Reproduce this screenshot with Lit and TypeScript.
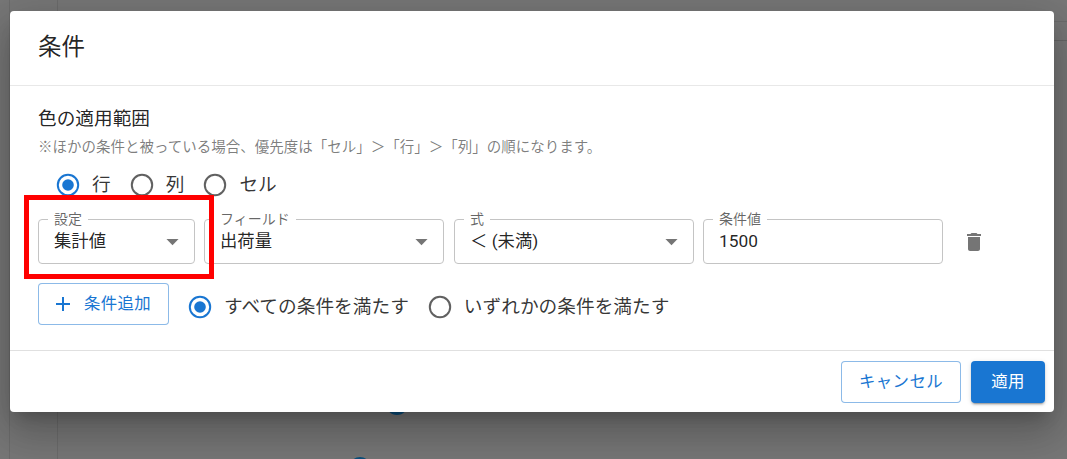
import { LitElement, html, css, svg } from "lit";
import { customElement } from "lit/decorators.js";

const caret = svg`<svg class="caret" width="29" height="29" viewBox="0 0 24 24"><path d="M7 10l5 5 5-5z" fill="#757575"/></svg>`;

@customElement("app-root")
export class AppRoot extends LitElement {
  static styles = css`
    :host {
      display: block;
      position: relative;
      width: 1067px;
      height: 459px;
      overflow: hidden;
      background: #777;
      font-family: Roboto, "Noto Sans CJK JP", sans-serif;
      color: rgba(0, 0, 0, 0.87);
    }
    * { box-sizing: border-box; }
    .bg { position: absolute; background: #6c6c6c; }
    .v1 { left: 9px; top: 0; width: 1px; height: 459px; }
    .v2 { left: 57px; top: 0; width: 1px; height: 459px; }
    .h1 { left: 1054px; top: 21px; width: 13px; height: 1px; }
    .h2 { left: 1054px; top: 40px; width: 13px; height: 1px; background: #666; }
    .dot { position: absolute; width: 22px; height: 22px; border-radius: 50%; border: 3px solid #0b4f7c; background: transparent; }
    .d1 { left: 386px; top: 393px; }
    .d2 { left: 349px; top: 457px; }
    .dialog {
      position: absolute;
      left: 10px;
      top: 11px;
      width: 1044px;
      height: 401px;
      background: #fff;
      border-radius: 4px;
      display: flex;
      flex-direction: column;
      box-shadow: 0 11px 15px -7px rgba(0,0,0,.2), 0 24px 38px 3px rgba(0,0,0,.14), 0 9px 46px 8px rgba(0,0,0,.12);
    }
    .title {
      height: 75px;
      padding: 0 28px 2px;
      display: flex;
      align-items: center;
      font-size: 23.5px;
      line-height: 32px;
      border-bottom: 1px solid #e8e8e8;
    }
    .content {
      flex: 1;
      padding: 21px 28px 0;
      display: flex;
      flex-direction: column;
      border-bottom: 1px solid #e0e0e0;
    }
    .heading { font-size: 18.67px; line-height: 24px; height: 24px; }
    .note { font-size: 14.5px; line-height: 18px; margin-top: 8px; color: rgba(0,0,0,.52); white-space: nowrap; }
    .radios { display: flex; align-items: center; height: 24px; }
    .scope { margin-top: 16px; padding-left: 18px; gap: 19px; }
    .opt { display: flex; align-items: center; gap: 12px; font-size: 18.7px; line-height: 24px; color: rgba(0,0,0,.8); }
    .radio { width: 24px; height: 24px; flex: none; display: block; }
    .fields { display: flex; margin-top: 22px; gap: 10px; align-items: center; }
    .field {
      position: relative;
      height: 45px;
      border: 1px solid #c4c4c4;
      border-radius: 4px;
      display: flex;
      align-items: center;
      justify-content: space-between;
      padding: 0 7px 0 15px;
      font-size: 17.33px;
      line-height: 24px;
      flex: none;
    }
    .value { margin-top: -1px; white-space: nowrap; }
    .caret { flex: none; }
    .legend {
      position: absolute;
      left: 9px;
      top: -9px;
      padding: 0 6px;
      background: #fff;
      font-size: 14px;
      line-height: 16px;
      color: rgba(0,0,0,.6);
      white-space: nowrap;
    }
    .w1 { width: 157px; margin-right: -1px; }
    .w2 { width: 240px; }
    .w3 { width: 240px; }
    .w4 { width: 240px; margin-left: -1px; }
    .trash { margin-left: 9px; width: 24px; height: 24px; display: block; flex: none; }
    .actions { display: flex; align-items: flex-start; margin-top: 19px; }
    .btn {
      font: inherit;
      font-size: 16.4px;
      line-height: 24px;
      border-radius: 4px;
      display: inline-flex;
      align-items: center;
      justify-content: center;
      letter-spacing: 0.4px;
      padding: 0;
    }
    .outlined { background: #fff; color: #1976d2; border: 1px solid rgba(25,118,210,.5); }
    .add { width: 131px; height: 42px; gap: 9px; flex: none; justify-content: flex-start; padding-left: 12px; }
    .all { margin: 12px 0 0 19px; gap: 19px; }
    .footer { height: 61px; display: flex; justify-content: flex-end; align-items: center; gap: 10px; padding: 0 9px 0 0; }
    .cancel { width: 120px; height: 42px; }
    .apply {
      width: 74px;
      height: 42px;
      background: #1976d2;
      color: #fff;
      border: none;
      box-shadow: 0 3px 1px -2px rgba(0,0,0,.2), 0 2px 2px 0 rgba(0,0,0,.14), 0 1px 5px 0 rgba(0,0,0,.12);
    }
    .callout {
      position: absolute;
      left: 24px;
      top: 195px;
      width: 190px;
      height: 84px;
      border: 5px solid #ff0000;
    }
  `;

  private radio(on: boolean) {
    const c = on ? "#1976d2" : "#616161";
    return svg`<svg class="radio" viewBox="0 0 24 24">
      <circle cx="12" cy="12" r="10.2" fill="none" stroke="${c}" stroke-width="2"/>
      ${on ? svg`<circle cx="12" cy="12" r="5.8" fill="${c}"/>` : null}
    </svg>`;
  }

  private opt(label: string, on = false) {
    return html`<label class="opt">${this.radio(on)}<span>${label}</span></label>`;
  }

  private select(cls: string, legend: string, value: string) {
    return html`<div class="field ${cls}">
      <span class="legend">${legend}</span>
      <span class="value">${value}</span>
      ${caret}
    </div>`;
  }

  render() {
    return html`
      <div class="bg v1"></div>
      <div class="bg v2"></div>
      <div class="bg h1"></div>
      <div class="bg h2"></div>
      <div class="dot d1"></div>
      <div class="dot d2"></div>
      <div class="dialog">
        <div class="title">条件</div>
        <div class="content">
          <div class="heading">色の適用範囲</div>
          <div class="note">※ほかの条件と被っている場合、優先度は「セル」＞「行」＞「列」の順になります。</div>
          <div class="radios scope">
            ${this.opt("行", true)} ${this.opt("列")} ${this.opt("セル")}
          </div>
          <div class="fields">
            ${this.select("w1", "設定", "集計値")}
            ${this.select("w2", "フィールド", "出荷量")}
            ${this.select("w3", "式", "＜ (未満)")}
            <div class="field w4">
              <span class="legend">条件値</span>
              <span class="value">1500</span>
            </div>
            <svg class="trash" viewBox="0 0 24 24"><path fill="#757575" d="M6 19c0 1.1.9 2 2 2h8c1.1 0 2-.9 2-2V7H6v12zM19 4h-3.5l-1-1h-5l-1 1H5v2h14V4z"/></svg>
          </div>
          <div class="actions">
            <button class="btn outlined add">
              <svg width="24" height="24" viewBox="0 0 24 24"><path fill="#1976d2" d="M19 13h-6v6h-2v-6H5v-2h6V5h2v6h6v2z"/></svg>
              <span>条件追加</span>
            </button>
            <div class="radios all">
              ${this.opt("すべての条件を満たす", true)}
              ${this.opt("いずれかの条件を満たす")}
            </div>
          </div>
        </div>
        <div class="footer">
          <button class="btn outlined cancel">キャンセル</button>
          <button class="btn apply">適用</button>
        </div>
      </div>
      <div class="callout"></div>
    `;
  }
}
